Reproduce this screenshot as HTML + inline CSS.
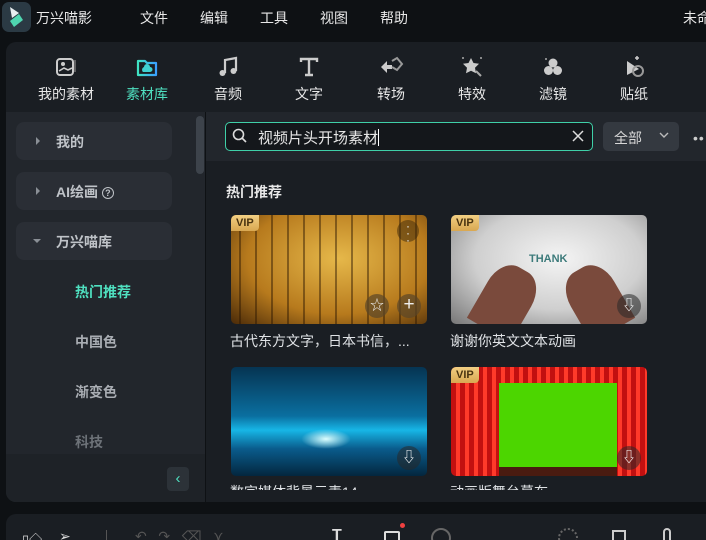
<!DOCTYPE html>
<html style="width:706px;height:540px;overflow:hidden"><head><meta charset="utf-8"><style>
*{margin:0;padding:0;box-sizing:border-box}
body{width:706px;height:540px;overflow:hidden;background:#0e1114;font-family:"Liberation Sans","Noto Sans CJK SC",sans-serif;color:#e6e8ea;position:relative;white-space:nowrap}
.a{position:absolute}
.top span{position:absolute;top:8px;font-size:14px;color:#e8e8e8}
.tb{position:absolute;top:54px;width:80px;text-align:center;font-size:14px;color:#e8e8e8}
.tb svg{display:block;margin:0 auto 4px;width:26px;height:26px}
.side{border-radius:8px;background:#2a2e35;left:16px;width:156px;height:38px}
.side .t{position:absolute;left:40px;top:10px;font-size:14px;color:#bfc3c8;font-weight:bold}
.side .tri{position:absolute;left:20px;top:15px;width:0;height:0;border-left:4px solid #8a8f96;border-top:4px solid transparent;border-bottom:4px solid transparent}
.sub{position:absolute;left:75px;font-size:14px;color:#a9adb3;font-weight:bold}
.card{position:absolute;width:196px;height:109px;border-radius:5px;overflow:hidden}
.vip{position:absolute;left:0;top:0;background:linear-gradient(#f2cf83,#d9a851);color:#4a3410;font-size:11px;font-weight:bold;padding:2px 5px;border-radius:4px 0 4px 0}
.dl{position:absolute;right:6px;bottom:6px;width:24px;height:24px;border-radius:50%;background:rgba(40,40,40,.55);color:#fff;font-size:14px;text-align:center;line-height:22px}
.cap{position:absolute;font-size:14px;color:#dfe2e5}
</style></head><body>
<div class="a" style="left:2px;top:2px;width:29px;height:30px;border-radius:7px;background:#2b3a44"></div>
<svg class="a" style="left:7px;top:6px" width="18" height="22" viewBox="0 0 18 22"><path d="M3 1 L12 7 L5 12 Z" fill="#e8eef0"/><path d="M12 8 L16 14 L7 21 L3 15 Z" fill="#4fd6b0"/></svg>
<div class="top">
<span style="left:36px">万兴喵影</span><span style="left:140px">文件</span><span style="left:200px">编辑</span><span style="left:260px">工具</span><span style="left:320px">视图</span><span style="left:380px">帮助</span><span style="left:683px">未命</span>
</div>
<div class="a" style="left:6px;top:42px;width:710px;height:460px;border-radius:10px;background:#1a1e23"></div>
<div class="tb" style="left:26px"><svg viewBox="0 0 26 26"><rect x="4" y="5" width="16" height="16" rx="3" fill="none" stroke="#ccc" stroke-width="2"/><circle cx="10" cy="10" r="2" fill="#ccc"/><path d="M6 17 l5-3 4 2 4-2" stroke="#ccc" stroke-width="1.6" fill="none"/><path d="M22 6 v12" stroke="#777" stroke-width="1.5"/></svg>我的素材</div>
<div class="tb" style="left:107px;color:#4fe0c0"><svg viewBox="0 0 26 26"><defs><linearGradient id="g" x1="0" x2="1"><stop offset="0" stop-color="#3fe3c2"/><stop offset="1" stop-color="#3aa0ff"/></linearGradient></defs><path d="M4 7 h7 l2 2 h9 v12 h-18 z" fill="none" stroke="url(#g)" stroke-width="2.2" stroke-linejoin="round"/><path d="M9 18 a3 3 0 0 1 1-5 a3 3 0 0 1 6 0 a2.5 2.5 0 0 1 0 5z" fill="#3fd0d0"/></svg>素材库</div>
<div class="tb" style="left:188px"><svg viewBox="0 0 26 26"><path d="M10 19 V6 l11-2 v13" stroke="#ccc" stroke-width="2.2" fill="none"/><circle cx="7.5" cy="19" r="3" fill="#ccc"/><circle cx="18.5" cy="17" r="3" fill="#ccc"/></svg>音频</div>
<div class="tb" style="left:269px"><svg viewBox="0 0 26 26"><path d="M5 8 V5 h16 v3 M13 5 v16 M9 21 h8" stroke="#ccc" stroke-width="2.4" fill="none"/></svg>文字</div>
<div class="tb" style="left:351px"><svg viewBox="0 0 26 26"><path d="M3 13 l6-6 v4 h5 v4 h-5 v4z" fill="#ccc"/><path d="M14 7 l5-3 5 6 -5 6 -5-3" stroke="#999" stroke-width="2" fill="none"/></svg>转场</div>
<div class="tb" style="left:432px"><svg viewBox="0 0 26 26"><path d="M12 4 l2.5 5 5.5 .8 -4 4 1 5.5 -5-2.6 -5 2.6 1-5.5 -4-4 5.5-.8z" fill="#ccc"/><path d="M17 17 l5 5" stroke="#aaa" stroke-width="2"/><circle cx="4" cy="4" r="1" fill="#aaa"/><circle cx="22" cy="4" r="1" fill="#aaa"/></svg>特效</div>
<div class="tb" style="left:513px"><svg viewBox="0 0 26 26"><circle cx="13" cy="9" r="4.5" fill="#ccc"/><circle cx="8.5" cy="16.5" r="4.5" fill="#ccc"/><circle cx="17.5" cy="16.5" r="4.5" fill="#ccc"/><circle cx="6" cy="5" r="1" fill="#aaa"/></svg>滤镜</div>
<div class="tb" style="left:594px"><svg viewBox="0 0 26 26"><path d="M6 7 v14 l12-6z" fill="#ccc"/><circle cx="17" cy="17" r="5" fill="none" stroke="#999" stroke-width="2"/><path d="M16 2 v4 M14 4 h4" stroke="#ccc" stroke-width="1.5"/></svg>贴纸</div>
<div class="a" style="left:6px;top:112px;width:199px;height:390px;background:#22262c;border-radius:0 0 0 10px"></div>
<div class="a" style="left:196px;top:116px;width:8px;height:58px;border-radius:4px;background:#3d434b"></div>
<div class="a side" style="top:122px"><div class="tri"></div><div class="t">我的</div></div>
<div class="a side" style="top:172px"><div class="tri"></div><div class="t">AI绘画 <span style="display:inline-block;width:12px;height:12px;border:1.4px solid #bfc3c8;border-radius:50%;font-size:9px;line-height:10px;text-align:center;vertical-align:1px">?</span></div></div>
<div class="a side" style="top:222px"><div style="position:absolute;left:17px;top:17px;border-top:4px solid #8a8f96;border-left:4px solid transparent;border-right:4px solid transparent"></div><div class="t">万兴喵库</div></div>
<div class="sub" style="top:282px;color:#4fe0c0">热门推荐</div>
<div class="sub" style="top:332px">中国色</div>
<div class="sub" style="top:382px">渐变色</div>
<div class="sub" style="top:432px;color:#6d7278">科技</div>
<div class="a" style="left:6px;top:454px;width:199px;height:48px;background:#1e2227;border-radius:0 0 0 10px"></div>
<div class="a" style="left:167px;top:467px;width:22px;height:24px;border-radius:4px;background:#2c3238;color:#4fe0c0;text-align:center;font-size:15px;line-height:23px">‹</div>
<div class="a" style="left:205px;top:112px;width:1px;height:390px;background:#0e1114"></div>
<div class="a" style="left:206px;top:112px;width:500px;height:49px;background:#22262c"></div>
<div class="a" style="left:225px;top:122px;width:368px;height:29px;border:1.5px solid #3fd0a8;border-radius:5px;background:#14171b"></div>
<svg class="a" style="left:232px;top:128px" width="16" height="16" viewBox="0 0 16 16"><circle cx="6.5" cy="6.5" r="5" fill="none" stroke="#ddd" stroke-width="1.6"/><path d="M10 10 l4 4" stroke="#ddd" stroke-width="1.6"/></svg>
<div class="a" style="left:258px;top:127px;font-size:15px;color:#e6e6e6">视频片头开场素材<span style="display:inline-block;width:1px;height:17px;background:#fff;vertical-align:-3px"></span></div>
<svg class="a" style="left:572px;top:130px" width="12" height="12"><path d="M1 1 L11 11 M11 1 L1 11" stroke="#ddd" stroke-width="1.5"/></svg>
<div class="a" style="left:603px;top:122px;width:76px;height:29px;border-radius:5px;background:#343940;font-size:14px;color:#d8d8d8;padding:6px 0 0 11px">全部</div>
<svg class="a" style="left:659px;top:132px" width="10" height="7"><path d="M1 1 l4 4 4-4" stroke="#bbb" stroke-width="1.4" fill="none"/></svg>
<div class="a" style="left:693px;top:130px;font-size:14px;color:#ccc;letter-spacing:1px">••</div>
<div class="a" style="left:226px;top:182px;font-size:14px;font-weight:bold;color:#e8e8e8">热门推荐</div>
<div class="card" style="left:231px;top:215px;background:radial-gradient(ellipse at 55% 40%,#e6b84a,#b77a1d 60%,#4a2a08 100%)">
<div style="position:absolute;inset:0;background:repeating-linear-gradient(90deg,transparent 0 8px,rgba(40,20,0,.45) 8px 10px,transparent 10px 16px)"></div>
<div class="vip">VIP</div>
<div style="position:absolute;right:8px;top:5px;width:22px;height:22px;border-radius:50%;background:rgba(60,40,10,.5);color:#eee;font-size:12px;text-align:center;line-height:7px;padding-top:3px">·<br>·<br>·</div>
<div style="position:absolute;right:38px;bottom:6px;width:24px;height:24px;border-radius:50%;background:rgba(90,70,40,.7);color:#eee;text-align:center;line-height:23px;font-size:14px">☆</div>
<div style="position:absolute;right:6px;bottom:6px;width:24px;height:24px;border-radius:50%;background:rgba(90,70,40,.7);color:#eee;text-align:center;line-height:22px;font-size:19px">+</div>
</div>
<div class="card" style="left:451px;top:215px;background:radial-gradient(ellipse at 55% 40%,#f4f4f4,#cfcfcf 55%,#777 100%)">
<div style="position:absolute;left:78px;top:38px;font-size:11px;color:#3c7a7a;font-weight:bold">THANK</div>
<div style="position:absolute;left:30px;top:50px;width:50px;height:70px;background:#7a4a3c;border-radius:40% 40% 0 0;transform:rotate(30deg)"></div>
<div style="position:absolute;left:120px;top:50px;width:50px;height:70px;background:#7a4a3c;border-radius:40% 40% 0 0;transform:rotate(-30deg)"></div>
<div class="vip">VIP</div><div class="dl">⇩</div></div>
<div class="cap" style="left:230px;top:331px">古代东方文字，日本书信，...</div>
<div class="cap" style="left:450px;top:331px">谢谢你英文文本动画</div>
<div class="card" style="left:231px;top:367px;background:linear-gradient(180deg,#063452,#0a6fa0 45%,#17b6e6 58%,#0a5c8c 75%,#03263e)"><div style="position:absolute;left:70px;top:62px;width:50px;height:20px;border-radius:50%;background:radial-gradient(#dff,transparent 70%)"></div><div class="dl">⇩</div></div>
<div class="card" style="left:451px;top:367px;background:repeating-linear-gradient(90deg,#c21010 0 5px,#ff3a2a 5px 9px)">
<div style="position:absolute;left:48px;top:16px;width:118px;height:84px;background:#4cd600"></div>
<div style="position:absolute;left:48px;top:100px;width:118px;height:9px;background:#4a1b10"></div>
<div class="vip">VIP</div><div class="dl">⇩</div></div>
<div class="a" style="left:206px;top:476px;width:500px;height:14px;overflow:hidden"><div class="cap" style="left:24px;top:6px">数字媒体背景元素14</div><div class="cap" style="left:244px;top:6px">动画版舞台幕布</div></div>
<div class="a" style="left:0;top:502px;width:706px;height:38px;overflow:hidden">
<div class="a" style="left:6px;top:12px;width:710px;height:40px;border-radius:10px;background:#1a1e23"></div>
<div class="a" style="left:22px;top:27px;font-size:13px;color:#ddd">▯◇</div>
<div class="a" style="left:59px;top:26px;font-size:14px;color:#ddd">➢</div>
<div class="a" style="left:106px;top:28px;width:1px;height:12px;background:#555"></div>
<div class="a" style="left:135px;top:26px;font-size:14px;color:#555">↶ &nbsp; ↷ &nbsp; ⌫ &nbsp; ⋎</div>
<div class="a" style="left:332px;top:25px;font-size:16px;color:#ddd;font-weight:bold">T</div>
<div class="a" style="left:384px;top:29px;width:16px;height:12px;border:2px solid #ddd;border-bottom:none;border-radius:2px"></div>
<div class="a" style="left:400px;top:21px;width:5px;height:5px;border-radius:50%;background:#f04040"></div>
<div class="a" style="left:431px;top:26px;width:20px;height:20px;border:2px solid #666;border-radius:50%"></div>
<div class="a" style="left:558px;top:26px;width:20px;height:20px;border:2px dotted #666;border-radius:50%"></div>
<div class="a" style="left:612px;top:28px;width:14px;height:14px;border:2px solid #ccc;border-bottom:none"></div>
<div class="a" style="left:663px;top:26px;width:8px;height:16px;border:2px solid #ccc;border-radius:4px"></div>
</div>
</body></html>
